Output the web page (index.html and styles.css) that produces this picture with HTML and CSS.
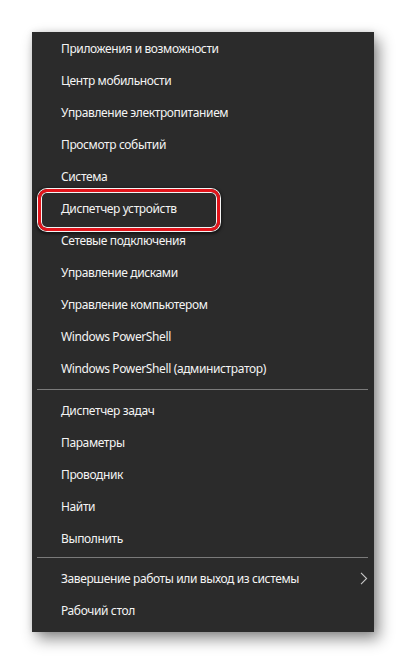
FILE: index.html
```html
<!DOCTYPE html>
<html lang="ru">
<head>
<meta charset="utf-8">
<link rel="stylesheet" href="styles.css">
</head>
<body>
<div class="menu">
  <div class="item">Приложения и возможности</div>
  <div class="item">Центр мобильности</div>
  <div class="item">Управление электропитанием</div>
  <div class="item">Просмотр событий</div>
  <div class="item">Система</div>
  <div class="item marked">Диспетчер устройств<span class="highlight"></span></div>
  <div class="item">Сетевые подключения</div>
  <div class="item">Управление дисками</div>
  <div class="item">Управление компьютером</div>
  <div class="item">Windows PowerShell</div>
  <div class="item">Windows PowerShell (администратор)</div>
  <div class="sep sep1"></div>
  <div class="item">Диспетчер задач</div>
  <div class="item">Параметры</div>
  <div class="item">Проводник</div>
  <div class="item">Найти</div>
  <div class="item">Выполнить</div>
  <div class="sep sep2"></div>
  <div class="item sub">Завершение работы или выход из системы
    <svg class="chev" width="8" height="13" viewBox="0 0 8 13"><path d="M1 0.8 L6.6 6.5 L1 12.2" fill="none" stroke="#c8c8c8" stroke-width="1.1"/></svg>
  </div>
  <div class="item">Рабочий стол</div>
</div>
</body>
</html>
```
FILE: styles.css
```css
html, body {
  margin: 0;
  padding: 0;
  background: #ffffff;
}
body {
  padding: 32px;
  font-family: "Noto Sans", "Open Sans", sans-serif;
}
.menu {
  width: 342px;
  background: #2b2b2b;
  padding-bottom: 6px;
  box-shadow: 5px 7px 14px rgba(0, 0, 0, 0.45), 0 0 6px rgba(0, 0, 0, 0.12);
}
.item {
  position: relative;
  height: 32px;
  display: flex;
  align-items: center;
  padding-left: 29px;
  color: #f4f4f4;
  font-size: 12px;
  letter-spacing: -0.38px;
}
.sep {
  height: 1px;
  background: #7a7a7a;
  margin-left: 5px;
  margin-right: 6px;
}
.sep1 {
  margin-top: 5px;
  margin-bottom: 4px;
}
.sep2 {
  margin-top: 3px;
  margin-bottom: 4px;
}
.chev {
  position: absolute;
  right: 6px;
  top: 10px;
}
.highlight {
  position: absolute;
  left: 6px;
  top: -3px;
  width: 176px;
  height: 36px;
  border: 3px solid #e3141b;
  border-radius: 9px;
  box-shadow: 0 0 0 1px #f4f4f4, inset 0 0 0 1px #f4f4f4, 0 1px 3px 2px rgba(0, 0, 0, 0.55);
}
```
